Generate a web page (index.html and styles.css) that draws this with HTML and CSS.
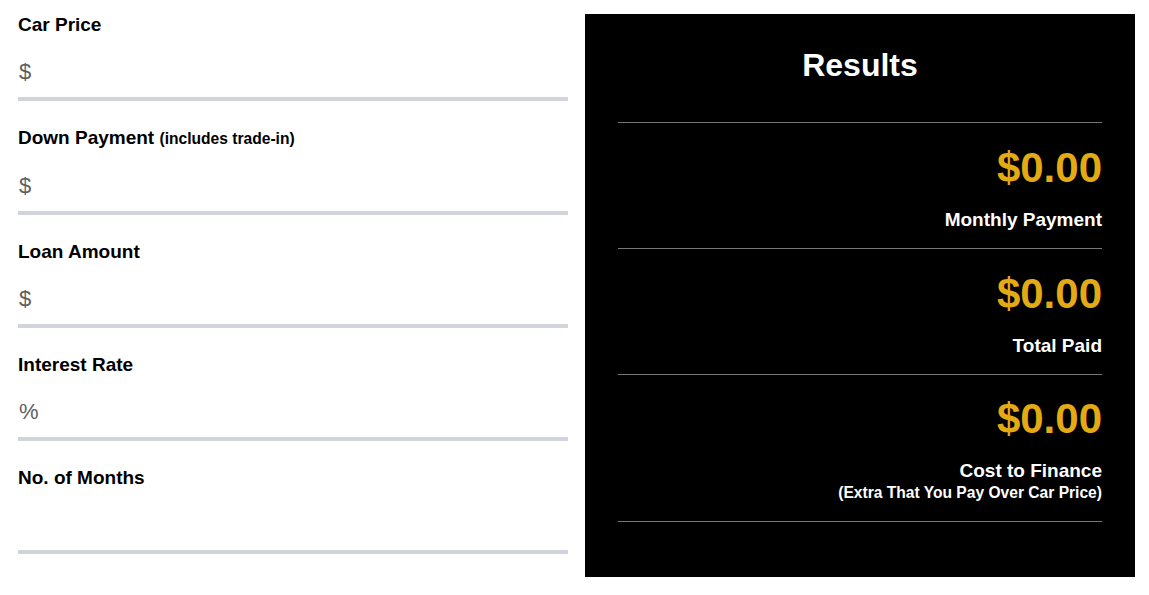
FILE: index.html
```html
<!DOCTYPE html>
<html lang="en">
<head>
<meta charset="utf-8">
<title>Car Loan Calculator</title>
<link rel="stylesheet" href="styles.css">
</head>
<body>
<div class="calc">
  <form class="inputs">
    <div class="field">
      <label class="label">Car Price</label>
      <div class="control"><span class="unit">$</span><input class="entry" type="text"></div>
    </div>
    <div class="field">
      <label class="label">Down Payment <small class="note">(includes trade-in)</small></label>
      <div class="control"><span class="unit">$</span><input class="entry" type="text"></div>
    </div>
    <div class="field">
      <label class="label">Loan Amount</label>
      <div class="control"><span class="unit">$</span><input class="entry" type="text"></div>
    </div>
    <div class="field">
      <label class="label">Interest Rate</label>
      <div class="control"><span class="unit">%</span><input class="entry" type="text"></div>
    </div>
    <div class="field">
      <label class="label">No. of Months</label>
      <div class="control"><input class="entry" type="text"></div>
    </div>
  </form>
  <section class="results">
    <h2 class="results-title">Results</h2>
    <div class="result">
      <div class="amount">$0.00</div>
      <div class="caption">Monthly Payment</div>
    </div>
    <div class="result">
      <div class="amount">$0.00</div>
      <div class="caption">Total Paid</div>
    </div>
    <div class="result result-last">
      <div class="amount">$0.00</div>
      <div class="caption">Cost to Finance</div>
      <div class="subcaption">(Extra That You Pay Over Car Price)</div>
    </div>
  </section>
</div>
</body>
</html>
```

FILE: styles.css
```css
html, body {
  margin: 0;
  padding: 0;
  background: #ffffff;
}

body {
  font-family: "Liberation Sans", Arial, sans-serif;
  color: #000000;
}

.calc {
  display: flex;
  align-items: flex-start;
  gap: 17px;
  padding: 14px 14px 0 18px;
}

.inputs {
  width: 550px;
  flex: 0 0 550px;
  margin: 0;
  display: flex;
  flex-direction: column;
  gap: 26px;
}

.field {
  display: flex;
  flex-direction: column;
}

.label {
  display: block;
  font-size: 19px;
  font-weight: bold;
  line-height: 21.8px;
  color: #000;
}

.note {
  font-size: 15.6px;
  font-weight: bold;
}

.control {
  height: 65.2px;
  box-sizing: border-box;
  display: flex;
  align-items: flex-end;
  padding-bottom: 13px;
  border-bottom: 4px solid #d1d5db;
}

.unit {
  font-size: 22px;
  line-height: 25px;
  color: #5e5e5e;
  padding-left: 1px;
}

.entry {
  flex: 1;
  border: 0;
  outline: none;
  background: transparent;
  font-family: inherit;
  font-size: 22px;
  line-height: 25px;
  height: 25px;
  padding: 0 4px;
  color: #333;
}

.results {
  flex: 0 0 550px;
  width: 550px;
  box-sizing: border-box;
  margin-top: 0;
  background: #000000;
  color: #ffffff;
  padding: 33px 33px 55px;
}

.results-title {
  margin: 0 0 38px;
  text-align: center;
  font-size: 32px;
  line-height: 37px;
  font-weight: bold;
}

.result {
  border-top: 1px solid #777777;
  padding: 21px 0 17px;
  text-align: right;
}

.result-last {
  border-bottom: 1px solid #777777;
  padding-top: 20px;
  padding-bottom: 19px;
}

.amount {
  font-size: 42px;
  line-height: 48px;
  font-weight: bold;
  color: #e3aa14;
  margin-bottom: 17px;
}

.caption {
  font-size: 19px;
  line-height: 22px;
  font-weight: bold;
}

.subcaption {
  font-size: 15.6px;
  line-height: 18px;
  font-weight: bold;
  margin-top: 2px;
}
```
